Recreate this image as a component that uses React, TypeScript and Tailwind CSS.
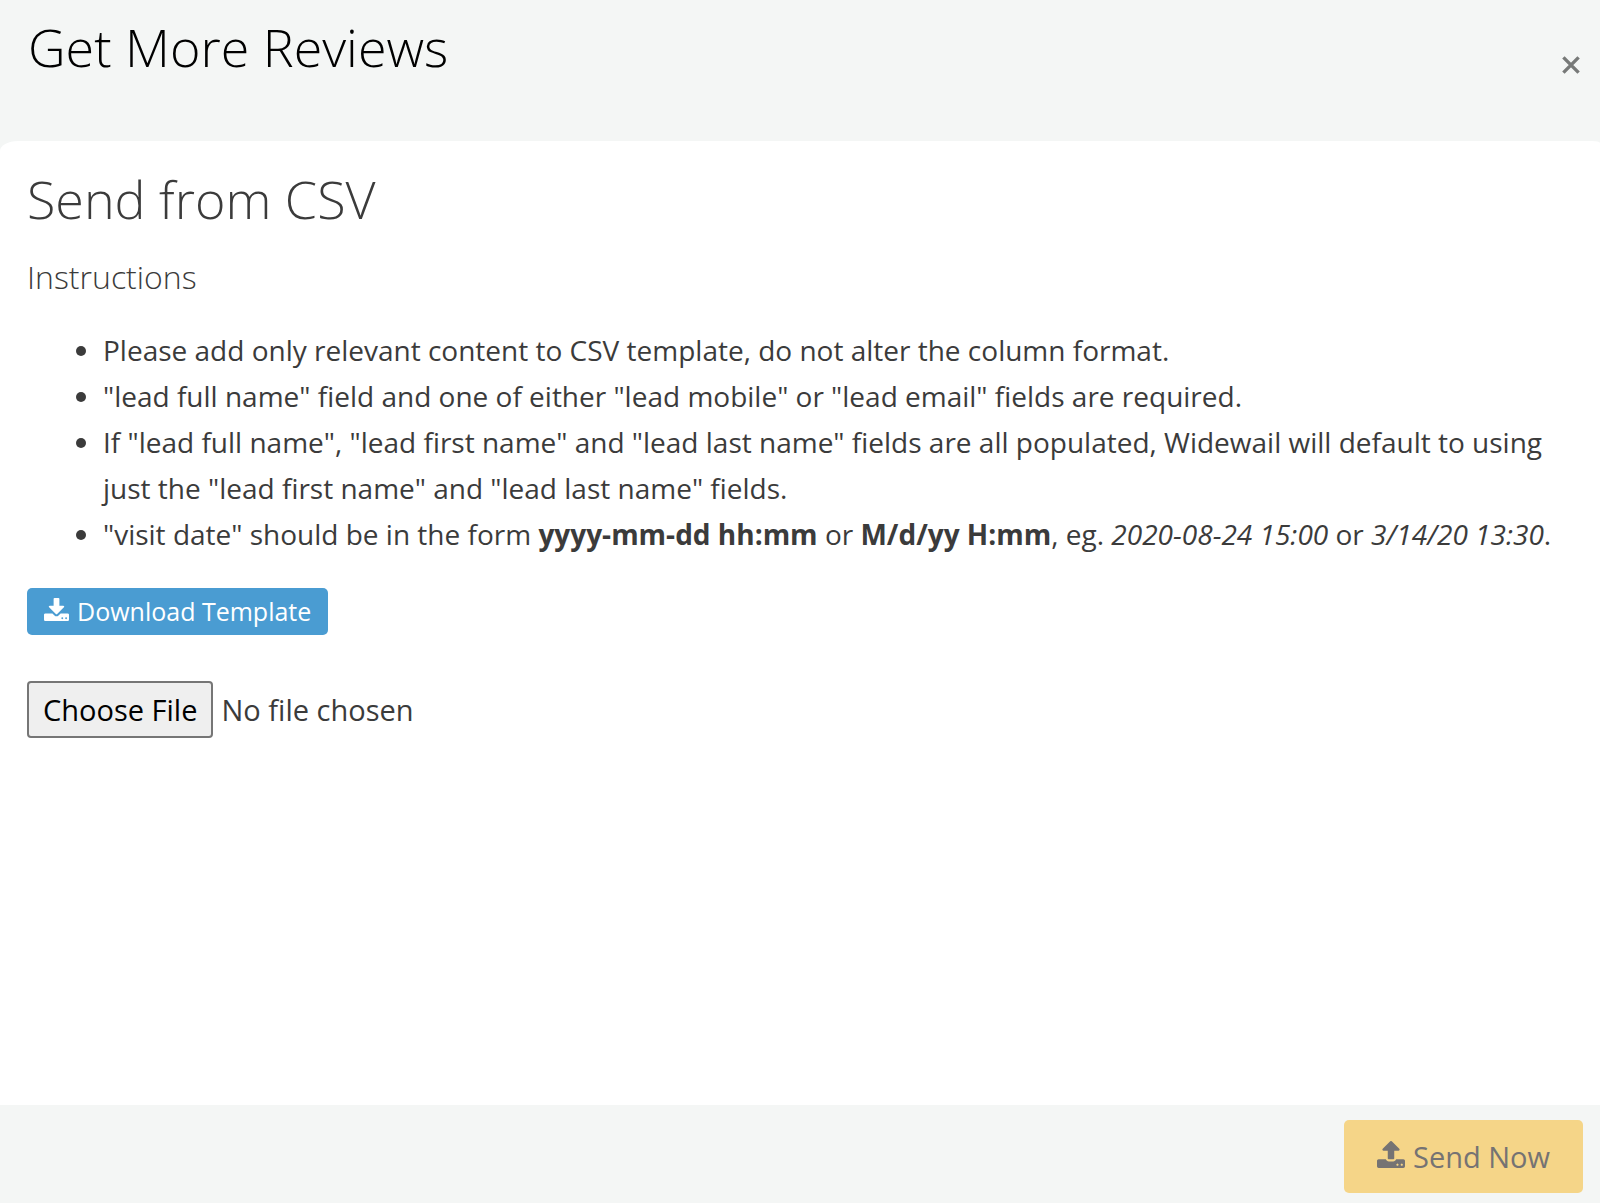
import type { ReactNode } from "react";

interface IIconProps {
    className?: string;
}

const DownloadIcon = ({ className }: IIconProps) => (
    <svg viewBox="64 0 1664 1536" fill="currentColor" aria-hidden="true" className={className}>
        <path d="M1344 1344q0-26-19-45t-45-19-45 19-19 45 19 45 45 19 45-19 19-45zm256 0q0-26-19-45t-45-19-45 19-19 45 19 45 45 19 45-19 19-45zm128-224v320q0 40-28 68t-68 28h-1472q-40 0-68-28t-28-68v-320q0-40 28-68t68-28h465l135 136q58 56 136 56t136-56l136-136h464q40 0 68 28t28 68zm-325-569q17 41-14 70l-448 448q-18 19-45 19t-45-19l-448-448q-31-29-14-70 17-39 59-39h256v-448q0-26 19-45t45-19h256q26 0 45 19t19 45v448h256q42 0 59 39z" />
    </svg>
);

const UploadIcon = ({ className }: IIconProps) => (
    <svg viewBox="64 64 1664 1600" fill="currentColor" aria-hidden="true" className={className}>
        <path d="M1344 1472q0-26-19-45t-45-19-45 19-19 45 19 45 45 19 45-19 19-45zm256 0q0-26-19-45t-45-19-45 19-19 45 19 45 45 19 45-19 19-45zm128-224v320q0 40-28 68t-68 28h-1472q-40 0-68-28t-28-68v-320q0-40 28-68t68-28h427q21 56 70.5 92t110.5 36h256q61 0 110.5-36t70.5-92h427q40 0 68 28t28 68zm-325-648q-17 40-59 40h-256v448q0 26-19 45t-45 19h-256q-26 0-45-19t-19-45v-448h-256q-42 0-59-40-17-39 14-69l448-448q18-19 45-19t45 19l448 448q31 30 14 69z" />
    </svg>
);

const CloseIcon = ({ className }: IIconProps) => (
    <svg
        viewBox="0 0 18 18"
        fill="none"
        stroke="currentColor"
        strokeWidth="3.4"
        aria-hidden="true"
        className={className}
    >
        <path d="M1.4 1.4l15.2 15.2M16.6 1.4l-15.2 15.2" />
    </svg>
);

const instructions: ReactNode[] = [
    "Please add only relevant content to CSV template, do not alter the column format.",
    '"lead full name" field and one of either "lead mobile" or "lead email" fields are required.',
    'If "lead full name", "lead first name" and "lead last name" fields are all populated, Widewail will default to using just the "lead first name" and "lead last name" fields.',
    <>
        "visit date" should be in the form <strong>yyyy-mm-dd hh:mm</strong> or <strong>M/d/yy H:mm</strong>, eg.{" "}
        <em>2020-08-24 15:00</em> or <em>3/14/20 13:30</em>.
    </>,
];

export default function App() {
    return (
        <div className="flex min-h-screen flex-col bg-[#f4f6f5] font-['Open_Sans',sans-serif] text-[28px] text-[#3b3b3b]">
            {/* Header */}
            <header className="flex items-start justify-between pt-3 pr-5 pb-15 pl-7">
                <h1 className="text-[52px] leading-[69px] font-light text-black">Get More Reviews</h1>
                <button type="button" aria-label="Close" className="mt-11 text-[#777978]">
                    <CloseIcon className="size-[18px]" />
                </button>
            </header>

            {/* Body */}
            <main className="flex-1 rounded-tl-[18px_10px] rounded-tr-[8px_2px] bg-white pt-6 pr-3 pb-10 pl-[27px]">
                <h2 className="text-[52px] leading-[68px] font-light">Send from CSV</h2>
                <h3 className="mt-5 text-[32px] leading-[48px] font-light">Instructions</h3>

                <ul className="mt-6 list-disc pt-0.5 pl-19 leading-[46px]">
                    {instructions.map((item, i) => (
                        <li key={i}>{item}</li>
                    ))}
                </ul>

                <button
                    type="button"
                    className="mt-[31px] flex h-[47px] items-center gap-2 rounded-[5px] bg-[#4a9cd2] px-[17px] text-[25px] text-white"
                >
                    <DownloadIcon className="mb-1 w-[25px]" />
                    Download Template
                </button>

                <input
                    type="file"
                    aria-label="CSV file"
                    className="mt-[46px] block w-full text-[29px] file:mr-2 file:h-[57px] file:rounded-[4px] file:border-2 file:border-solid file:border-[#767676] file:bg-[#efefef] file:px-[14px] file:text-black"
                />
            </main>

            {/* Footer */}
            <footer className="flex justify-end px-[17px] pt-[15px] pb-[10px]">
                <button
                    type="button"
                    disabled
                    className="flex h-[73px] items-center gap-2 rounded-[5px] bg-[#f5d588] px-[33px] text-[29px] text-[#757373]"
                >
                    <UploadIcon className="mb-1 w-7" />
                    Send Now
                </button>
            </footer>
        </div>
    );
}
